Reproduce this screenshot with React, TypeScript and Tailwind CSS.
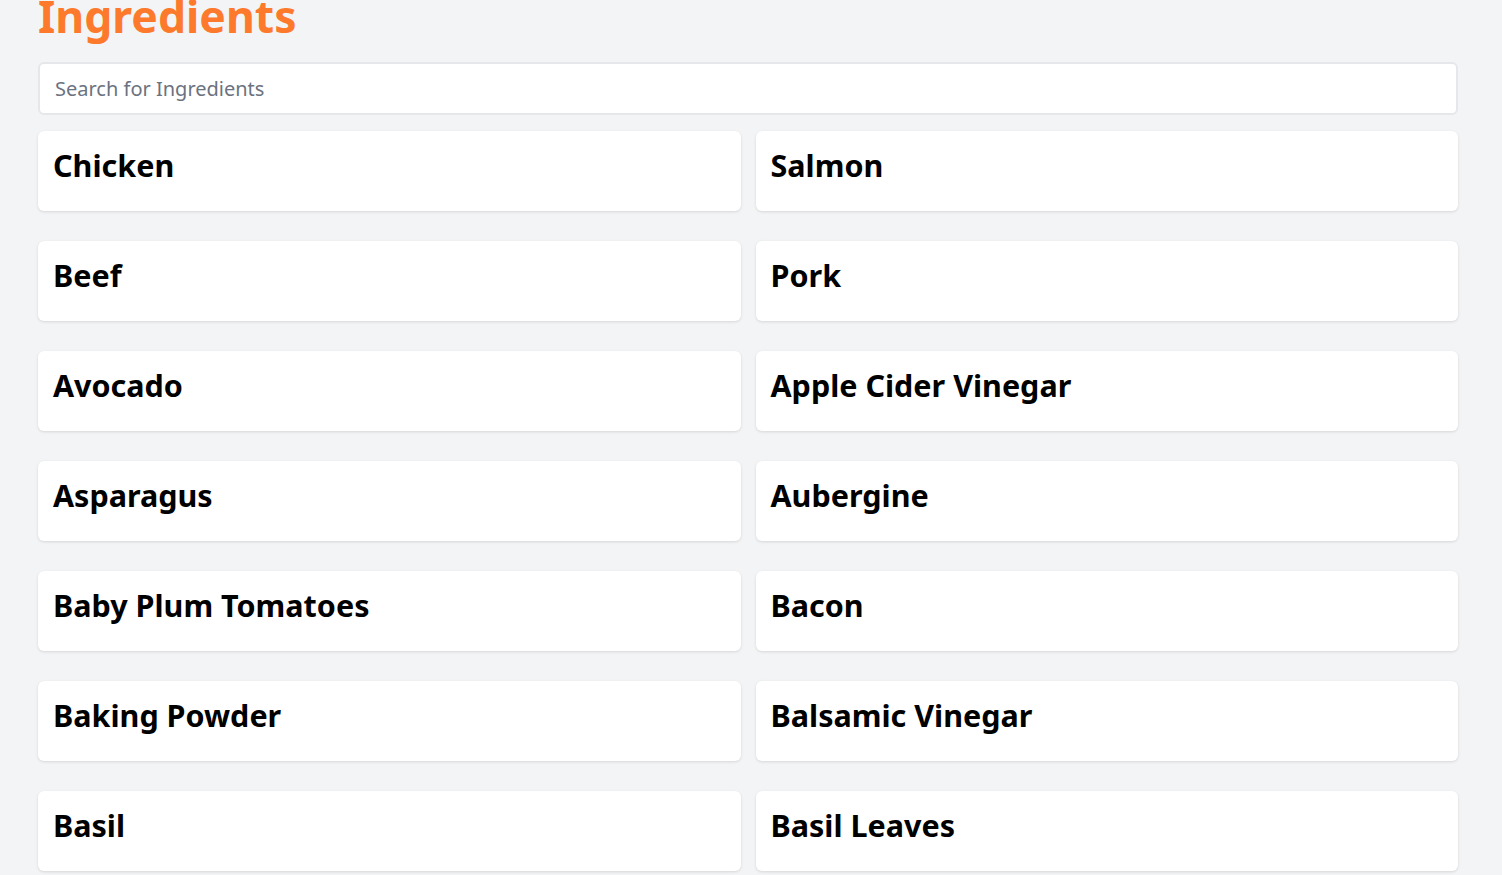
import React from "react";

const items = [
  "Chicken",
  "Salmon",
  "Beef",
  "Pork",
  "Avocado",
  "Apple Cider Vinegar",
  "Asparagus",
  "Aubergine",
  "Baby Plum Tomatoes",
  "Bacon",
  "Baking Powder",
  "Balsamic Vinegar",
  "Basil",
  "Basil Leaves",
];

export default function App() {
  return (
    <div
      className="min-h-screen bg-[#f3f4f6] overflow-hidden"
      style={{ fontFamily: '"Noto Sans", "Open Sans", sans-serif' }}
    >
      <div className="w-[1420px] ml-[38px] mt-[-12px]">
        <h1 className="text-[44.5px] leading-[56px] font-bold text-[#fd7a2c]">Ingredients</h1>
        <input
          className="mt-[18px] w-full h-[53px] bg-white border-2 border-[#e5e7eb] rounded-md px-[15px] text-[20px] text-gray-700 placeholder:text-[#6b7280] outline-none"
          placeholder="Search for Ingredients"
        />
        <div className="mt-[16px] grid grid-cols-2 gap-x-[15px] gap-y-[30px]">
          {items.map((it) => (
            <div
              key={it}
              className="h-[80px] bg-white rounded-md shadow-[0_1px_3px_rgba(0,0,0,0.12)] px-[15px] pt-[14px]"
            >
              <h2 className="text-[30.5px] leading-[40px] font-bold text-black">{it}</h2>
            </div>
          ))}
        </div>
      </div>
    </div>
  );
}
